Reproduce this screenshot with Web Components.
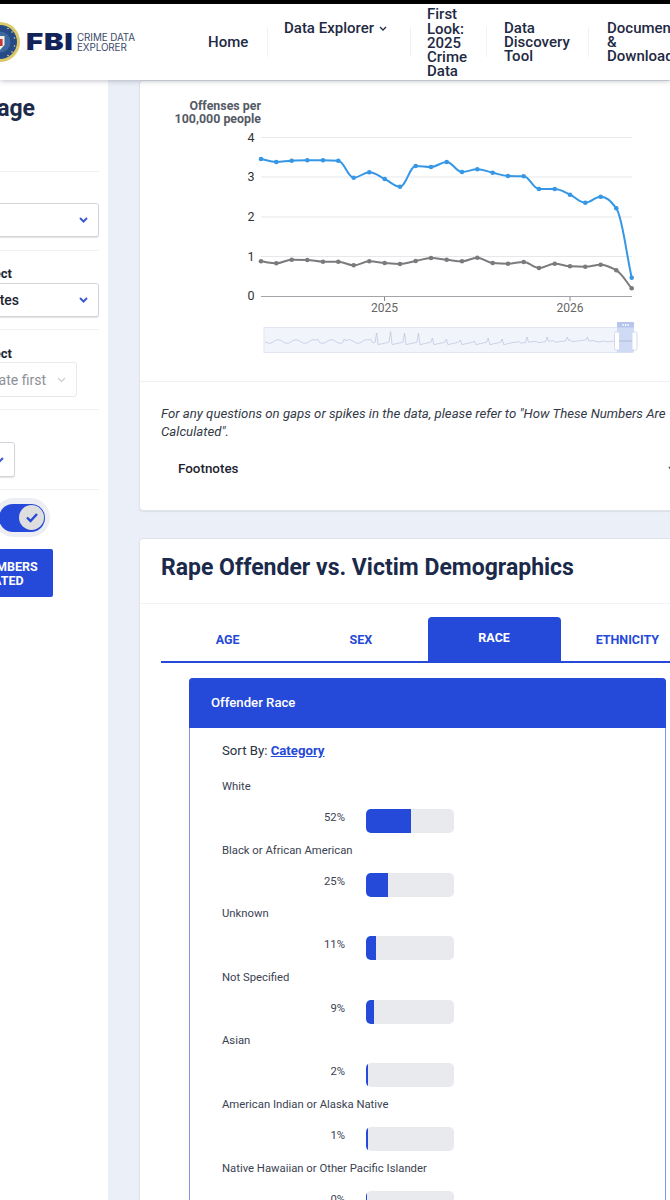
<!DOCTYPE html>
<html lang="en"><head><meta charset="utf-8"><title>Crime Data Explorer</title>
<style>
html,body{margin:0;padding:0;height:1200px;overflow:hidden;background:#ebeff7;font-family:Roboto,"Liberation Sans",sans-serif;color:#1d2a4a}
.main{display:flex;height:1120px;overflow:hidden}
.col{flex:none;width:562px;margin-left:31px;display:flex;flex-direction:column;gap:27px}
</style></head><body>
<cde-header></cde-header>
<div class="main">
  <cde-sidebar></cde-sidebar>
  <div class="col">
    <cde-card style="height:431px">
      <cde-chart></cde-chart>
      <cde-note></cde-note>
    </cde-card>
    <cde-card style="height:900px">
      <cde-card-title>Rape Offender vs. Victim Demographics</cde-card-title>
      <cde-tabs></cde-tabs>
      <cde-panel heading="Offender Race">
        <cde-bar label="White" value="52" fill="45"></cde-bar>
        <cde-bar label="Black or African American" value="25" fill="21.5"></cde-bar>
        <cde-bar label="Unknown" value="11" fill="9.5"></cde-bar>
        <cde-bar label="Not Specified" value="9" fill="8"></cde-bar>
        <cde-bar label="Asian" value="2" fill="1.5"></cde-bar>
        <cde-bar label="American Indian or Alaska Native" value="1" fill="1.5"></cde-bar>
        <cde-bar label="Native Hawaiian or Other Pacific Islander" value="0" fill="1"></cde-bar>
      </cde-panel>
    </cde-card>
  </div>
</div>
<script>
const chev=(c,w=2,W=9,H=6)=>`<svg width="${W}" height="${H}" viewBox="0 0 9 6" preserveAspectRatio="none" aria-hidden="true"><polyline points="1,1 4.5,4.5 8,1" fill="none" stroke="${c}" stroke-width="${w}"/></svg>`;
function def(name,html,setup){
  customElements.define(name,class extends HTMLElement{
    connectedCallback(){
      if(this.shadowRoot)return;
      const r=this.attachShadow({mode:'open'});
      r.innerHTML=typeof html==='function'?html(this):html;
      if(setup)setup(r,this);
    }
  });
}
def('cde-nav-item',h=>`<style>
:host{display:block;flex:none;box-sizing:border-box;font:500 15px/14.3px Roboto,sans-serif;color:#1f2a44;white-space:nowrap}
</style><slot></slot>`);
def('cde-header',`<style>
:host{display:block;position:relative;z-index:3;background:#fff}
.black{height:4px;background:#000}
.bar{height:76px;display:flex;align-items:center;box-shadow:0 1px 5px rgba(40,50,70,.3);background:#fff;overflow:hidden}
.logo{flex:none;width:140px;display:flex;align-items:center}
.fbi{display:inline-block;width:46px;font:900 23.5px/1 Inter,"Liberation Sans",sans-serif;color:#12245a;letter-spacing:.6px;margin-left:6px;transform:scaleX(1.25);transform-origin:0 50%}
.sub{font:400 9.9px/10px Inter,"Liberation Sans",sans-serif;color:#3c4a6b;margin-left:5px;white-space:nowrap;letter-spacing:-.1px}
nav{display:flex;align-items:center;margin-left:68px}
.sep{flex:none;width:1px;height:30px;background:#f1f2f5}
.top{align-self:center;height:41px}
.low{margin-top:2px}
svg.c{margin-left:1px;vertical-align:2px}
</style>
<div class="black"></div>
<div class="bar">
  <div class="logo">
    <svg width="20" height="40" viewBox="0 0 20 40" style="flex:none" aria-hidden="true">
      <circle cx="0" cy="20" r="20" fill="#d9c968"/><circle cx="0" cy="20" r="17" fill="#264a86"/>
      <circle cx="0" cy="20" r="10.5" fill="#3c679f"/>
      <path d="M0 14h4.5v9L0 28z" fill="#f3f1e6"/><path d="M0 17h2.6v7H0z" fill="#c43a3a"/>
      <g fill="#e6d877"><circle cx="8" cy="6.5" r=".8"/><circle cx="12" cy="10" r=".8"/><circle cx="14.5" cy="16" r=".8"/><circle cx="14.5" cy="24" r=".8"/><circle cx="12" cy="30" r=".8"/><circle cx="8" cy="33.5" r=".8"/></g>
    </svg>
    <span class="fbi">FBI</span>
    <span class="sub">CRIME DATA<br>EXPLORER</span>
  </div>
  <nav>
    <cde-nav-item style="width:59px">Home</cde-nav-item><div class="sep"></div>
    <cde-nav-item class="top" style="width:126px;margin-left:16px">Data Explorer <svg class="c" width="8" height="5" viewBox="0 0 8 5"><polyline points="1,1 4,4 7,1" fill="none" stroke="#1f2a44" stroke-width="1.3"/></svg></cde-nav-item><div class="sep"></div>
    <cde-nav-item class="low" style="width:59px;margin-left:16px">First<br>Look:<br>2025<br>Crime<br>Data</cde-nav-item><div class="sep" ></div>
    <cde-nav-item style="width:84px;margin-left:17px">Data<br>Discovery<br>Tool</cde-nav-item><div class="sep"></div>
    <cde-nav-item style="margin-left:18px">Documents<br>&amp;<br>Downloads</cde-nav-item>
  </nav>
</div>`);
def('cde-select',h=>{
  const dis=h.hasAttribute('disabled');
  const col=dis?'#c9ccd3':'#3f5bd8';
  return `<style>
:host{display:flex;justify-content:flex-end;align-items:center;box-sizing:border-box;height:35px;background:#fff;border:1px solid ${dis?'#e8e9ec':'#d3d5da'};border-radius:3px;box-shadow:${dis?'none':'0 1px 1px rgba(0,0,0,.12)'};padding-right:10px;font:500 14px Roboto,sans-serif;color:#1d2430;white-space:nowrap}
:host([disabled]){font-weight:400;color:#8d9097}
span{margin-right:var(--gap,0)}
</style><span><slot></slot></span>${chev(col,dis?1.2:2)}`});
def('cde-sidebar',`<style>
:host{display:block;flex:none;width:108px;height:100%;background:#fff;overflow:hidden}
.in{width:300px;margin-left:-192px;box-sizing:border-box;padding-right:9px}
section{box-sizing:border-box;border-bottom:1px solid #f0f1f4;position:relative}
.title{height:92px;padding:13px 64px 0 0;text-align:right;font:700 23px/32px Roboto,sans-serif;color:#1d2a4a}
.s1{height:79px;padding-top:31px}
.s2{height:79px;padding-top:15px}
.s3{height:80px;padding-top:15px}
.s4{height:80px;padding-top:32px}
.lab{font:700 13px/15px Roboto,sans-serif;color:#1d2430;text-align:right;padding-right:87px}
.s2 .lab{margin-bottom:2px}
.s3 .lab{margin-top:1px;margin-bottom:1px}
.tw{margin:8px 49px 0 0;display:flex;justify-content:flex-end}
.halo{width:56px;height:39px;background:#eceef4;border-radius:20px;display:flex;align-items:center;justify-content:flex-end;padding-right:5px;box-sizing:border-box}
.track{width:46px;height:28px;background:#2549d8;border-radius:14px;display:flex;align-items:center;justify-content:flex-end;padding-right:1px;box-sizing:border-box}
.knob{width:25px;height:25px;border-radius:50%;background:#dedede;display:flex;align-items:center;justify-content:center}
button{display:block;margin:12px 46px 0 auto;box-sizing:border-box;width:160px;height:48px;border:0;border-radius:2px;background:#2549d8;color:#fff;font:700 12.5px/14px Roboto,sans-serif;text-align:center;padding:1px 2px 0 0}
</style>
<div class="in">
  <section class="title">Customize Page</section>
  <section class="s1"><cde-select style="height:34px"></cde-select></section>
  <section class="s2"><div class="lab">Select</div><cde-select style="--gap:60px;height:34px">United States</cde-select></section>
  <section class="s3"><div class="lab">Select</div><cde-select disabled style="margin-right:22px;--gap:11px">Select a state first</cde-select></section>
  <section class="s4"><cde-select style="margin-right:84px"></cde-select></section>
  <div class="tw"><div class="halo"><div class="track"><div class="knob"><svg width="14" height="11" viewBox="0 0 14 11"><polyline points="2,5.5 5.5,9 12,2" fill="none" stroke="#2549d8" stroke-width="2.4"/></svg></div></div></div></div>
  <button>HOW THESE NUMBERS<br>ARE CALCULATED</button>
</div>`);
def('cde-card',`<style>
:host{display:block;flex:none;box-sizing:border-box;width:578px;background:#fff;border:1px solid #e0e3ea;border-radius:4px;box-shadow:0 1px 1px rgba(40,50,70,.08)}
</style><slot></slot>`);
const blue=[[261,159],[276.3,162],[291.7,160.7],[307.3,160.3],[323,160.3],[338.3,160.7],[353.7,177.7],[369.3,172.3],[384.7,179],[400,186.7],[415.7,166],[431,167],[446.7,162],[462,172],[477.3,169.3],[492.7,172.7],[508,176],[523.7,176.3],[539,189],[554.7,189],[570,194.7],[585.3,202.7],[600.7,196.7],[616.3,208.3],[631.7,277.7]];
const gray=[[261,261.3],[276.3,263.3],[291.7,259.7],[307.3,260],[323,261.7],[338.3,261.7],[353.7,265.3],[369.3,261.3],[384.7,263],[400,264],[415.7,261],[431,258],[446.7,259.7],[462,261.3],[477.3,257.7],[492.7,263],[508,263.7],[523.7,262],[539,268],[554.7,263.7],[570,266.3],[585.3,266.7],[600.7,264.7],[616.3,270.3],[631.7,288.3]];
function smooth(p){
  let d=`M${p[0][0]} ${p[0][1]}`;
  const n=p.length,s=[],m=[];
  for(let i=0;i<n-1;i++)s[i]=(p[i+1][1]-p[i][1])/(p[i+1][0]-p[i][0]);
  m[0]=s[0];m[n-1]=s[n-2];
  for(let i=1;i<n-1;i++)m[i]=s[i-1]*s[i]<=0?0:2*s[i-1]*s[i]/(s[i-1]+s[i]);
  for(let i=0;i<n-1;i++){const h=(p[i+1][0]-p[i][0])/2.6;
    d+=`C${(p[i][0]+h).toFixed(1)} ${(p[i][1]+m[i]*h).toFixed(1)} ${(p[i+1][0]-h).toFixed(1)} ${(p[i+1][1]-m[i+1]*h).toFixed(1)} ${p[i+1][0]} ${p[i+1][1]}`;}
  return d;
}
function mini(){
  let d='M265 342',x=265,i=0;
  while(x<612){
    x+=1.55;i++;
    let y;
    if(x<375){y=341.5+Math.sin(i*.55)*1.8;if(x>305&&i%17===0)y=339}
    else if(x<510){y=345-(i%9)*.35;if(i%9===0)y=x<425?333-(i%27===0?1.5:0):338+(i%4)}
    else if(x<595){y=343.5-(i%11)*.15-(x-510)*.03;if(i%13===0)y=337}
    else y=341.5+Math.sin(i)*.4;
    d+=`L${x.toFixed(1)} ${y.toFixed(1)}`;
  }
  return d+'L632 341';
}
def('cde-chart',()=>{
  const grid=[137.5,177,217,256.5].map(y=>`<line x1="261" x2="632" y1="${y}" y2="${y}" stroke="#e7e8ec" stroke-width="1.2"/>`).join('');
  const ylab=[[4,141.7],[3,181],[2,221],[1,260.5],[0,300.3]].map(([t,y])=>`<text x="254.5" y="${y}" text-anchor="end" font-size="12.5" fill="#333">${t}</text>`).join('');
  const dots=(a,c)=>a.map(p=>`<circle cx="${p[0]}" cy="${p[1]}" r="2.3" fill="${c}"/>`).join('');
  return `<style>:host{display:block;height:300px;border-bottom:1px solid #f0f1f4;overflow:hidden}svg{display:block;font-family:Roboto,sans-serif}</style>
<svg width="578" height="300" viewBox="140 81 578 300">
  <text x="261" y="109.5" text-anchor="end" font-size="12.4" font-weight="700" fill="#555a66">Offenses per</text>
  <text x="261" y="122.5" text-anchor="end" font-size="12.4" font-weight="700" fill="#555a66">100,000 people</text>
  ${grid}${ylab}
  <line x1="261" x2="632" y1="296.5" y2="296.5" stroke="#a3a5aa" stroke-width="1.2"/>
  <line x1="384.5" x2="384.5" y1="297" y2="301" stroke="#888"/><line x1="570" x2="570" y1="297" y2="301" stroke="#888"/>
  <text x="384.5" y="312" text-anchor="middle" font-size="12" fill="#666">2025</text>
  <text x="570" y="312" text-anchor="middle" font-size="12" fill="#666">2026</text>
  <path d="${smooth(gray)}" fill="none" stroke="#7b7b7d" stroke-width="2"/>${dots(gray,'#7b7b7d')}
  <path d="${smooth(blue)}" fill="none" stroke="#3597e6" stroke-width="2"/>${dots(blue,'#3597e6')}
  <rect x="264" y="327.5" width="368" height="25" fill="#f2f4fb" stroke="#e1e5f3"/>
  <path d="${mini()}" fill="none" stroke="#b9c1dd" stroke-width=".7"/>
  <rect x="617" y="322" width="17" height="30.5" fill="#cfdaf5"/>
  <rect x="617" y="322" width="17" height="5.5" rx="1" fill="#b6c4ee"/>
  <g fill="#fff"><rect x="622.5" y="324" width="1.2" height="2"/><rect x="625" y="324" width="1.2" height="2"/><rect x="627.5" y="324" width="1.2" height="2"/></g>
  <rect x="614.5" y="332" width="5" height="18" rx="1.5" fill="#fff" stroke="#d3daf0"/>
  <rect x="632" y="332" width="5" height="18" rx="1.5" fill="#fff" stroke="#d3daf0"/>
  <path d="M619 341h13" stroke="#a9b2d2" stroke-width=".8"/>
</svg>`});
def('cde-note',`<style>
:host{display:block;padding:23px 22px 0 21px;font:italic 400 13.2px/18px Roboto,sans-serif;color:#333a47}
.f{display:flex;justify-content:space-between;align-items:center;margin:19px 0 0 17px;font:500 13.4px/18px Roboto,sans-serif;color:#1d2430;padding-right:17px}
p{margin:0}
</style><p>For any questions on gaps or spikes in the data, please refer to "How These Numbers Are Calculated".</p>
<div class="f"><span>Footnotes</span>${chev('#555',1.6)}</div>`);
def('cde-card-title',`<style>
:host{display:block;height:65px;box-sizing:border-box;padding:12px 21px 0;border-bottom:1px solid #f2f3f6;font:700 23px/34px Roboto,sans-serif;color:#1b2a4a;white-space:nowrap}
</style><slot></slot>`);
def('cde-tabs',`<style>
:host{display:flex;margin:13px 22px 0 21px;height:46px;box-sizing:border-box;border-bottom:2px solid #2549d8}
div{flex:1;display:flex;align-items:center;justify-content:center;font:700 12.5px Roboto,sans-serif;color:#2549d8;letter-spacing:0;height:44px}
.on{background:#2549d8;color:#fff;border-radius:4px 4px 0 0;padding-bottom:4px;box-sizing:border-box}
</style><div>AGE</div><div>SEX</div><div class="on">RACE</div><div>ETHNICITY</div>`);
def('cde-panel',h=>`<style>
:host{display:block;margin:15px 0 0 49px;width:477px;box-sizing:border-box;border:1px solid #7d94ea;border-top:0;border-radius:4px 4px 0 0;height:800px}
h3{margin:0 -1px;height:50px;box-sizing:border-box;background:#2549d8;color:#fff;border-radius:4px 4px 0 0;font:500 13.2px/50px Roboto,sans-serif;padding-left:22px}
.sort{margin:14px 0 0 32px;font:400 13.2px/18px Roboto,sans-serif;color:#2a3140}
.sort b{color:#2549d8;text-decoration:underline;font-weight:700}
.list{margin:19px 0 0 32px}
</style><h3>${h.getAttribute('heading')}</h3><div class="sort">Sort By: <b>Category</b></div><div class="list"><slot></slot></div>`);
def('cde-bar',h=>`<style>
:host{display:block;height:63.6px;font:400 11.3px/16px Roboto,sans-serif;color:#3a4252}
.l{height:30px;white-space:nowrap}
.r{display:flex;align-items:center}
.v{width:123px;text-align:right;margin-top:-6px}
.t{margin-left:21px;width:87.5px;height:24px;background:#e8eaed;border-radius:5px;overflow:hidden}
.f{height:100%;background:#2549d8}
</style><div class="l">${h.getAttribute('label')}</div><div class="r"><div class="v">${h.getAttribute('value')}%</div><div class="t"><div class="f" style="width:${h.getAttribute('fill')}px"></div></div></div>`);
</script>
</body></html>
